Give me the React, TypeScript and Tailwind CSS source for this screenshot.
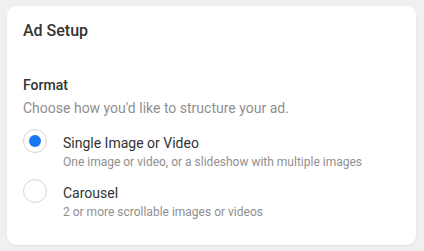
import React, { useState } from 'react';

const options = [
  { id: 'single', title: 'Single Image or Video', desc: 'One image or video, or a slideshow with multiple images' },
  { id: 'carousel', title: 'Carousel', desc: '2 or more scrollable images or videos' },
];

const App = () => {
  const [format, setFormat] = useState('single');

  return (
    <div className="min-h-screen bg-[#f0f0f0] pl-[7px] pr-[8px] pt-[6px] pb-[6px]" style={{ fontFamily: 'Roboto, "Noto Sans", sans-serif' }}>
      <div className="bg-white rounded-[9px] shadow-[0_1px_2px_rgba(0,0,0,0.08)] px-4 pt-[13px] pb-[24px]">
        <h2 className="text-[16px] leading-6 font-medium text-[#333333]">Ad Setup</h2>

        <div className="mt-[34px]">
          <h3 className="text-[14px] leading-4 font-medium text-[#333333]">Format</h3>
          <p className="mt-[5px] text-[14px] leading-5 text-[#8f8f8f]">Choose how you'd like to structure your ad.</p>

          <div className="mt-[15px] flex flex-col gap-[12px]">
            {options.map(opt => (
              <label key={opt.id} className="flex items-start gap-4 cursor-pointer" onClick={() => setFormat(opt.id)}>
                <span className="mt-[-4px] w-6 h-6 rounded-full border border-[#d6d6d6] flex items-center justify-center shrink-0">
                  {format === opt.id && <span className="w-3 h-3 rounded-full bg-[#1877f2]" />}
                </span>
                <span className="flex flex-col">
                  <span className="text-[14px] leading-5 text-[#333333]">{opt.title}</span>
                  <span className="text-[12px] leading-[18px] text-[#8f8f8f]">{opt.desc}</span>
                </span>
              </label>
            ))}
          </div>
        </div>
      </div>
    </div>
  );
};

export default App;
